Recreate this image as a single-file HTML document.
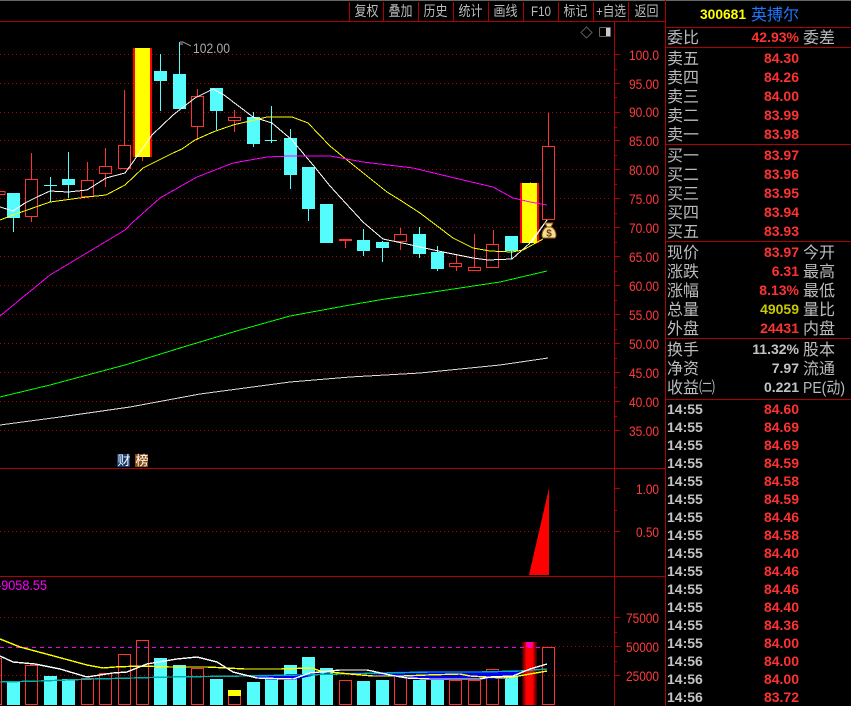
<!DOCTYPE html>
<html><head><meta charset="utf-8"><style>
html,body{margin:0;padding:0;background:#000;width:851px;height:706px;overflow:hidden}
svg{display:block}
.c{font-family:"Liberation Sans","WenQuanYi Zen Hei","Noto Sans CJK SC",sans-serif;font-size:16px;fill:#bcbcbc}
.n{font-family:"Liberation Sans",sans-serif;font-size:14px;font-weight:bold;fill:#ff3232;text-anchor:end}
.g{fill:#c4c4c4}
.t{font-family:"Liberation Sans",sans-serif;font-size:14px;font-weight:bold;fill:#c4c4c4}
.a{font-family:"Liberation Sans",sans-serif;font-size:14px;fill:#ff3c3c;text-anchor:end}
.tb{text-anchor:middle;font-size:14px}
</style></head><body>
<svg width="851" height="706" viewBox="0 0 851 706" xmlns="http://www.w3.org/2000/svg">
<defs><linearGradient id="gl" x1="0" x2="1" y1="0" y2="0"><stop offset="0" stop-color="#300"/><stop offset=".3" stop-color="#f00"/><stop offset=".7" stop-color="#f00"/><stop offset="1" stop-color="#300"/></linearGradient></defs>
<rect width="851" height="706" fill="#000"/>
<rect x="0" y="0" width="851" height="1" fill="#666"/>

<g fill="none" stroke="#b00000" stroke-dasharray="1 3" shape-rendering="crispEdges">
<path d="M0 54.500H612M0 83.500H612M0 112.500H612M0 140.500H612M0 169.500H612M0 198.500H612M0 227.500H612M0 256.500H612M0 285.500H612M0 314.500H612M0 343.500H612M0 372.500H612M0 401.500H612M0 430.500H612M0 531.500H612M0 617.500H612M0 675.500H612M543 646.500H612"/>
</g>

<g shape-rendering="crispEdges">
<!-- frame lines -->
<g stroke="#b00000" fill="none">
<path d="M0 21.500H665M0 468.500H665M0 576.500H665M614.500 22V706M665.500 0V706"/>
<path d="M665 27.500H851M665 47.500H851M665 144.500H851M665 241.500H851M665 338.500H851M665 399.500H851"/>
<path d="M349.500 2V21M383.500 2V21M418.500 2V21M453.500 2V21M488.500 2V21M523.500 2V21M558.500 2V21M593.500 2V21M628.500 2V21"/>
<path d="M615 54.500H620M615 83.500H620M615 112.500H620M615 140.500H620M615 169.500H620M615 198.500H620M615 227.500H620M615 256.500H620M615 285.500H620M615 314.500H620M615 343.500H620M615 372.500H620M615 401.500H620M615 430.500H620M615 488.500H620M615 531.500H620M615 617.500H620M615 646.500H620M615 675.500H620"/>
<path d="M615 69.500H617M615 97.500H617M615 127.500H617M615 155.500H617M615 184.500H617M615 213.500H617M615 242.500H617M615 271.500H617M615 300.500H617M615 329.500H617M615 358.500H617M615 387.500H617M615 416.500H617M615 510.500H617M615 632.500H617M615 661.500H617"/>
</g>

<!-- candles wicks cyan -->
<g stroke="#54fcfc" fill="none">
<path d="M13.500 193V232M50.500 177V202M68.500 152V198M160.500 54V111M179.500 42V109M216.500 88V130M253.500 112V147M271.500 106V143M290.500 129V189M308.500 167V221M326.500 204V243M363.500 229V256M382.500 241V262M419.500 227V258M437.500 246V271M511.500 251V259"/>
<path d="M44 185.500H57M265 140.500H277"/>
</g>
<g fill="#54fcfc">
<rect x="7" y="193" width="13" height="25"/>
<rect x="62" y="179" width="13" height="6"/>
<rect x="154" y="71" width="13" height="10"/>
<rect x="173" y="74" width="13" height="35"/>
<rect x="210" y="88" width="13" height="23"/>
<rect x="247" y="117" width="13" height="27"/>
<rect x="284" y="138" width="13" height="37"/>
<rect x="302" y="167" width="13" height="42"/>
<rect x="320" y="204" width="13" height="39"/>
<rect x="357" y="240" width="13" height="11"/>
<rect x="376" y="242" width="13" height="6"/>
<rect x="413" y="234" width="13" height="20"/>
<rect x="431" y="252" width="13" height="17"/>
<rect x="505" y="236" width="13" height="15"/>
</g>
<!-- red wicks -->
<g stroke="#ff3232" fill="none">
<path d="M31.500 153V222M87.500 162V198M105.500 148V187M124.500 90V169M142.500 157V161M197.500 89V140M234.500 110V132M345.500 239V248M400.500 228V250M456.500 255V271M474.500 234V267M493.500 230V244M548.500 113V146M530.500 182V184"/>
</g>
<g fill="#000" stroke="#ff3232">
<rect x="25.500" y="179.500" width="12" height="37"/>
<rect x="81.500" y="180.500" width="12" height="16"/>
<rect x="99.500" y="166.500" width="12" height="7"/>
<rect x="118.500" y="145.500" width="12" height="23"/>
<rect x="191.500" y="96.500" width="12" height="30"/>
<rect x="228.500" y="117.500" width="12" height="3"/>
<rect x="394.500" y="234.500" width="12" height="7"/>
<rect x="449.500" y="263.500" width="12" height="3"/>
<rect x="468.500" y="267.500" width="12" height="3"/>
<rect x="486.500" y="244.500" width="12" height="23"/>
<rect x="542.500" y="146.500" width="12" height="73"/>
</g>
<path d="M0 191.500H5V194.500H0" fill="none" stroke="#ff3232"/>
<rect x="339" y="239" width="13" height="2" fill="#ff3232"/>
<!-- yellow candles -->
<rect x="133" y="48" width="19" height="109" fill="#f00"/>
<rect x="135" y="48" width="15" height="109" fill="#ff0"/>
<rect x="520" y="183" width="19" height="60" fill="#f00"/>
<rect x="522" y="183" width="15" height="60" fill="#ff0"/>

<!-- MAs -->
<g fill="none" stroke-width="1">
<polyline stroke="#fff" points="0,207 13,211 25,203 37,197 50,191 68,192 87,190 106,178 125,173 133,162 152,135 173,115 195,98 213,89 224,95 253,117 272,123 292,140 313,165 330,186 340,197 363,222 383,239 407,244 420,247 443,252 473,258 488,260 512,259 530,243 547,220"/>
<polyline stroke="#ff0" points="0,220 13,215 50,202 87,197 106,195 125,185 143,168 173,153 182,149 195,140 213,132 233,125 267,117 292,117 308,123 330,146 347,160 387,192 400,200 420,213 453,238 473,248 490,251 512,252 523,250 543,239"/>
<polyline stroke="#f0f" points="0,316 50,275 125,230 133,222 160,198 197,177 233,163 267,157 290,156 330,156 363,162 413,168 463,180 493,187 513,198 530,202 547,205"/>
<polyline stroke="#0f0" points="0,397 50,385 125,365 180,348 240,330 290,316 350,305 385,299 420,294 500,282 547,271"/>
<polyline stroke="#ddd" points="0,425 60,417 130,407 200,394 290,382 350,377 420,373 500,365 548,358"/>
</g>

<!-- flag -->
<path d="M180 42H183L191 46M180 44H183" fill="none" stroke="#aaa"/>
<!-- diamond / panel icon -->
<path d="M586.500 27L592 32.500L586.500 38L581 32.500Z" fill="none" stroke="#555"/>
<rect x="599.500" y="27.500" width="11" height="9" rx="1" fill="#000" stroke="#666"/>
<rect x="606" y="28" width="4" height="8" fill="#ccc"/>

<!-- mid pane -->
<polygon points="529,575 549,488 549,575" fill="#f00"/>

<!-- volume -->
<g fill="#54fcfc">
<rect x="7" y="682" width="13" height="23"/><rect x="44" y="676" width="13" height="29"/><rect x="62" y="679" width="13" height="26"/>
<rect x="154" y="658" width="13" height="47"/><rect x="173" y="665" width="13" height="40"/><rect x="210" y="679" width="13" height="26"/>
<rect x="247" y="682" width="13" height="23"/><rect x="265" y="679" width="13" height="26"/><rect x="284" y="665" width="13" height="40"/>
<rect x="302" y="657" width="13" height="48"/><rect x="320" y="668" width="13" height="37"/><rect x="357" y="681" width="13" height="24"/>
<rect x="376" y="680" width="13" height="25"/><rect x="413" y="680" width="13" height="25"/><rect x="431" y="677" width="13" height="28"/>
<rect x="505" y="676" width="13" height="29"/>
</g>
<g fill="none" stroke="#ff3232">
<rect x="-10.500" y="658.500" width="12" height="46"/>
<rect x="25.500" y="665.500" width="12" height="39"/>
<rect x="81.500" y="678.500" width="12" height="26"/>
<rect x="99.500" y="673.500" width="12" height="31"/>
<rect x="118.500" y="654.500" width="12" height="50"/>
<rect x="136.500" y="640.500" width="12" height="64"/>
<rect x="191.500" y="668.500" width="12" height="36"/>
<rect x="228.500" y="690.500" width="12" height="14"/>
<rect x="339.500" y="680.500" width="12" height="24"/>
<rect x="394.500" y="676.500" width="12" height="28"/>
<rect x="449.500" y="680.500" width="12" height="24"/>
<rect x="468.500" y="680.500" width="12" height="24"/>
<rect x="486.500" y="669.500" width="12" height="35"/>
<rect x="542.500" y="647.500" width="12" height="57"/>
</g>
<rect x="228" y="690" width="13" height="6" fill="#ff0"/>
<rect x="522" y="642" width="15" height="63" fill="url(#gl)"/>
<rect x="526" y="642" width="7" height="5" fill="#f0a"/>
<path d="M0 647.500H543" stroke="#f000f0" stroke-dasharray="4 4" fill="none"/>
<polygon points="245,675 300,674 340,673 430,671 480,671 520,670 520,676 505,679 430,680 407,679 390,676 330,672 293,680 257,679" fill="#0000f0"/>
<g fill="none" stroke-width="1.400">
<polyline stroke="#00b0b0" points="0,682 40,681 93,679 133,678 170,677 243,676 300,675 340,674 430,672 480,672 520,671 547,669"/>
<polyline stroke="#ff0" points="0,639 20,647 50,655 87,665 103,668 115,667 140,666 170,667 207,667 227,668 245,669 280,669 312,668 320,671 350,674 373,676 403,676 427,675 460,674 470,676 503,678 513,677 530,674 547,671"/>
<polyline stroke="#fff" points="0,656 13,662 35,664 60,669 87,677 113,673 127,672 147,664 177,659 197,657 217,662 233,672 257,678 293,679 310,673 340,670 367,670 390,675 407,678 430,679 480,679 490,677 513,676 530,669 547,664"/>
</g>
<!-- 财榜 -->
<rect x="117" y="454" width="13" height="13" fill="#143c70"/>
<rect x="135" y="454" width="13" height="13" fill="#8a4a10"/>
</g>

<!-- money bag -->
<path d="M531 243L547 220" stroke="#fff" fill="none"/>
<g>
<path d="M545 223H553L551 227C556 229 557 236 555 238H543C541 236 542 229 547 227Z" fill="#f6dc90" stroke="#8a5a10"/>
<path d="M546.500 227H551.500" stroke="#8a5a10" fill="none"/>
<text x="549" y="236.500" font-family="Liberation Sans,sans-serif" font-size="10" font-weight="bold" fill="#6a3c10" text-anchor="middle">$</text>
</g>

<text x="117.500" y="465" class="c" style="font-size:13px;fill:#fff">财</text>
<text x="135.500" y="465" class="c" style="font-size:13px;fill:#fff">榜</text>
<text x="193" y="53" font-family="Liberation Sans,sans-serif" font-size="14" fill="#aaa" textLength="37" lengthAdjust="spacingAndGlyphs">102.00</text>
<text x="-3" y="590" font-family="Liberation Sans,sans-serif" font-size="14" fill="#f0f" textLength="50" lengthAdjust="spacingAndGlyphs">-9058.55</text>

<!-- toolbar -->
<g class="c">
<text class="c tb" x="366.500" y="16" textLength="24" lengthAdjust="spacingAndGlyphs">复权</text>
<text class="c tb" x="400.500" y="16" textLength="24" lengthAdjust="spacingAndGlyphs">叠加</text>
<text class="c tb" x="435.500" y="16" textLength="24" lengthAdjust="spacingAndGlyphs">历史</text>
<text class="c tb" x="470.500" y="16" textLength="24" lengthAdjust="spacingAndGlyphs">统计</text>
<text class="c tb" x="505.500" y="16" textLength="24" lengthAdjust="spacingAndGlyphs">画线</text>
<text class="c tb" x="541" y="16" style="font-size:14px" textLength="20" lengthAdjust="spacingAndGlyphs">F10</text>
<text class="c tb" x="575.500" y="16" textLength="24" lengthAdjust="spacingAndGlyphs">标记</text>
<text class="c tb" x="611" y="16" textLength="30" lengthAdjust="spacingAndGlyphs">+自选</text>
<text class="c tb" x="646.500" y="16" textLength="24" lengthAdjust="spacingAndGlyphs">返回</text>
</g>

<!-- axis labels -->
<g class="a">
<text class="a" x="659" y="60" textLength="30" lengthAdjust="spacingAndGlyphs">100.0</text>
<text class="a" x="659" y="89" textLength="30" lengthAdjust="spacingAndGlyphs">95.00</text>
<text class="a" x="659" y="117" textLength="30" lengthAdjust="spacingAndGlyphs">90.00</text>
<text class="a" x="659" y="146" textLength="30" lengthAdjust="spacingAndGlyphs">85.00</text>
<text class="a" x="659" y="175" textLength="30" lengthAdjust="spacingAndGlyphs">80.00</text>
<text class="a" x="659" y="204" textLength="30" lengthAdjust="spacingAndGlyphs">75.00</text>
<text class="a" x="659" y="233" textLength="30" lengthAdjust="spacingAndGlyphs">70.00</text>
<text class="a" x="659" y="262" textLength="30" lengthAdjust="spacingAndGlyphs">65.00</text>
<text class="a" x="659" y="291" textLength="30" lengthAdjust="spacingAndGlyphs">60.00</text>
<text class="a" x="659" y="320" textLength="30" lengthAdjust="spacingAndGlyphs">55.00</text>
<text class="a" x="659" y="349" textLength="30" lengthAdjust="spacingAndGlyphs">50.00</text>
<text class="a" x="659" y="378" textLength="30" lengthAdjust="spacingAndGlyphs">45.00</text>
<text class="a" x="659" y="407" textLength="30" lengthAdjust="spacingAndGlyphs">40.00</text>
<text class="a" x="659" y="436" textLength="30" lengthAdjust="spacingAndGlyphs">35.00</text>
<text class="a" x="659" y="494" textLength="23" lengthAdjust="spacingAndGlyphs">1.00</text>
<text class="a" x="659" y="537" textLength="23" lengthAdjust="spacingAndGlyphs">0.50</text>
<text class="a" x="659" y="623" textLength="33" lengthAdjust="spacingAndGlyphs">75000</text>
<text class="a" x="659" y="652" textLength="33" lengthAdjust="spacingAndGlyphs">50000</text>
<text class="a" x="659" y="681" textLength="33" lengthAdjust="spacingAndGlyphs">25000</text>
</g>

<!-- header -->
<text x="700" y="19" font-family="Liberation Sans,sans-serif" font-size="14" font-weight="bold" fill="#ff0" textLength="46" lengthAdjust="spacingAndGlyphs">300681</text>
<text x="751" y="20" class="c" style="fill:#1e78ff">英搏尔</text>

<!-- left labels -->
<g>
<text class="c" x="667" y="43">委比</text><text class="c" x="803" y="43">委差</text>
<text class="c" x="667" y="64">卖五</text><text class="c" x="667" y="83">卖四</text><text class="c" x="667" y="102">卖三</text><text class="c" x="667" y="121">卖二</text><text class="c" x="667" y="140">卖一</text>
<text class="c" x="667" y="161">买一</text><text class="c" x="667" y="180">买二</text><text class="c" x="667" y="199">买三</text><text class="c" x="667" y="218">买四</text><text class="c" x="667" y="237">买五</text>
<text class="c" x="667" y="258">现价</text><text class="c" x="803" y="258">今开</text>
<text class="c" x="667" y="277">涨跌</text><text class="c" x="803" y="277">最高</text>
<text class="c" x="667" y="296">涨幅</text><text class="c" x="803" y="296">最低</text>
<text class="c" x="667" y="315">总量</text><text class="c" x="803" y="315">量比</text>
<text class="c" x="667" y="334">外盘</text><text class="c" x="803" y="334">内盘</text>
<text class="c" x="667" y="355">换手</text><text class="c" x="803" y="355">股本</text>
<text class="c" x="667" y="374">净资</text><text class="c" x="803" y="374">流通</text>
<text class="c" x="667" y="393">收益㈡</text><text class="c" x="803" y="393" textLength="42" lengthAdjust="spacingAndGlyphs">PE(动)</text>
</g>

<!-- numbers -->
<g>
<text class="n" x="799" y="42">42.93%</text>
<text class="n" x="799" y="63">84.30</text><text class="n" x="799" y="82">84.26</text><text class="n" x="799" y="101">84.00</text><text class="n" x="799" y="120">83.99</text><text class="n" x="799" y="139">83.98</text>
<text class="n" x="799" y="160">83.97</text><text class="n" x="799" y="179">83.96</text><text class="n" x="799" y="198">83.95</text><text class="n" x="799" y="217">83.94</text><text class="n" x="799" y="236">83.93</text>
<text class="n" x="799" y="257">83.97</text><text class="n" x="799" y="276">6.31</text><text class="n" x="799" y="295">8.13%</text>
<text class="n" x="799" y="314" style="fill:#c8c800">49059</text><text class="n" x="799" y="333">24431</text>
<text class="n g" x="799" y="354" style="fill:#c4c4c4">11.32%</text><text class="n" x="799" y="373" style="fill:#c4c4c4">7.97</text><text class="n" x="799" y="392" style="fill:#c4c4c4">0.221</text>
</g>

<!-- ticks -->
<g>
<text class="t" x="667" y="414">14:55</text><text class="n" x="799" y="414">84.60</text>
<text class="t" x="667" y="432">14:55</text><text class="n" x="799" y="432">84.69</text>
<text class="t" x="667" y="450">14:55</text><text class="n" x="799" y="450">84.69</text>
<text class="t" x="667" y="468">14:55</text><text class="n" x="799" y="468">84.59</text>
<text class="t" x="667" y="486">14:55</text><text class="n" x="799" y="486">84.58</text>
<text class="t" x="667" y="504">14:55</text><text class="n" x="799" y="504">84.59</text>
<text class="t" x="667" y="522">14:55</text><text class="n" x="799" y="522">84.46</text>
<text class="t" x="667" y="540">14:55</text><text class="n" x="799" y="540">84.58</text>
<text class="t" x="667" y="558">14:55</text><text class="n" x="799" y="558">84.40</text>
<text class="t" x="667" y="576">14:55</text><text class="n" x="799" y="576">84.46</text>
<text class="t" x="667" y="594">14:55</text><text class="n" x="799" y="594">84.46</text>
<text class="t" x="667" y="612">14:55</text><text class="n" x="799" y="612">84.40</text>
<text class="t" x="667" y="630">14:55</text><text class="n" x="799" y="630">84.36</text>
<text class="t" x="667" y="648">14:55</text><text class="n" x="799" y="648">84.00</text>
<text class="t" x="667" y="666">14:56</text><text class="n" x="799" y="666">84.00</text>
<text class="t" x="667" y="684">14:56</text><text class="n" x="799" y="684">84.00</text>
<text class="t" x="667" y="702">14:56</text><text class="n" x="799" y="702">83.72</text>
</g>
</svg>
</body></html>
